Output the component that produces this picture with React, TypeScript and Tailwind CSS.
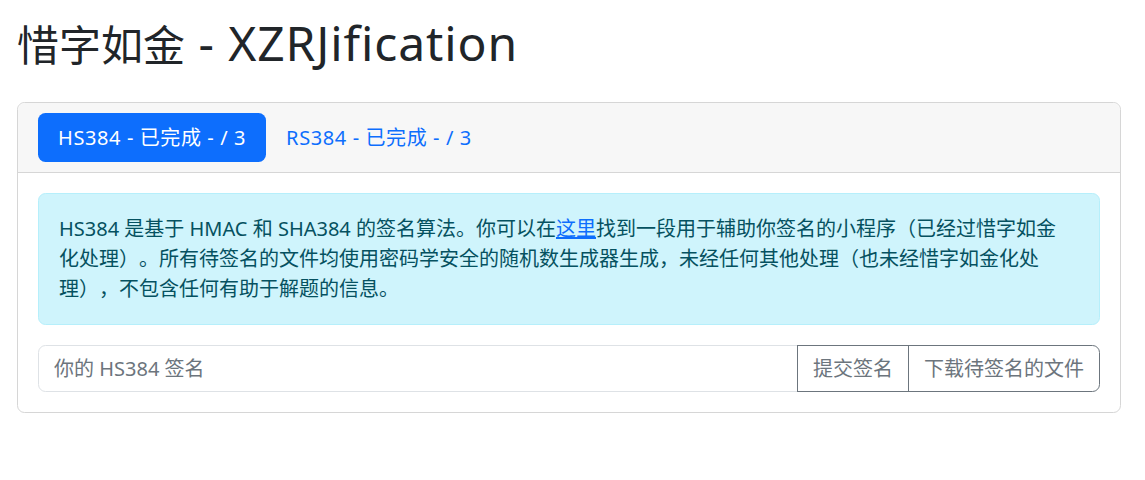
import { useState } from 'react';

const tabs = [
    { id: 'hs384', label: 'HS384 - 已完成 - / 3' },
    { id: 'rs384', label: 'RS384 - 已完成 - / 3' },
];

export default function App() {
    const [active, setActive] = useState('hs384');
    const [signature, setSignature] = useState('');

    return (
        <div className="min-h-screen bg-white pl-[17px] pr-[24px] pt-[16px] font-['Noto_Sans','Noto_Sans_CJK_SC',sans-serif] text-[#212529] [text-spacing-trim:space-all]">
            <h1 className="mb-[32px] h-[54px] text-[48px] font-normal leading-[54px] tracking-[0.9px]">
                <span className="text-[42px] tracking-normal">惜字如金</span> - XZRJification
            </h1>

            <div className="rounded-[7.5px] border border-[#d6d6d6] bg-white">
                <div className="flex rounded-t-[7.5px] border-b border-[#d6d6d6] bg-[#f7f7f7] px-[20px] py-[10px]">
                    {tabs.map((tab) => (
                        <button
                            key={tab.id}
                            onClick={() => setActive(tab.id)}
                            className={
                                active === tab.id
                                    ? 'rounded-[7.5px] bg-[#0d6efd] px-[20px] py-[9.5px] text-[20px] leading-[30px] tracking-[0.6px] text-white'
                                    : 'rounded-[7.5px] px-[20px] py-[9.5px] text-[20px] leading-[30px] tracking-[0.6px] text-[#0d6efd]'
                            }
                        >
                            {tab.label}
                        </button>
                    ))}
                </div>

                <div className="p-[20px]">
                    <div className="mb-[20px] rounded-[7.5px] border border-[#b6effb] bg-[#cff4fc] px-[20px] py-[20px] text-[20px] leading-[30px] text-[#055160]">
                        HS384 是基于 HMAC 和 SHA384 的签名算法。你可以在
                        <a href="#" className="text-[#0d6efd] underline">这里</a>
                        找到一段用于辅助你签名的小程序（已经过惜字如金
                        <br />
                        化处理）。所有待签名的文件均使用密码学安全的随机数生成器生成，未经任何其他处理（也未经惜字如金化处
                        <br />
                        理），不包含任何有助于解题的信息。
                    </div>

                    <div className="flex">
                        <input
                            value={signature}
                            onChange={(e) => setSignature(e.target.value)}
                            placeholder="你的 HS384 签名"
                            className="h-[47px] min-w-0 flex-1 rounded-l-[7.5px] border border-[#dee2e6] px-[15px] text-[20px] leading-[30px] text-[#212529] outline-none placeholder:text-[#6c757d]"
                        />
                        <button className="-ml-px h-[47px] whitespace-nowrap border border-[#6c757d] px-[15px] text-[20px] leading-[30px] text-[#6c757d]">
                            提交签名
                        </button>
                        <button className="-ml-px h-[47px] whitespace-nowrap rounded-r-[7.5px] border border-[#6c757d] px-[15px] text-[20px] leading-[30px] text-[#6c757d]">
                            下载待签名的文件
                        </button>
                    </div>
                </div>
            </div>
        </div>
    );
}
